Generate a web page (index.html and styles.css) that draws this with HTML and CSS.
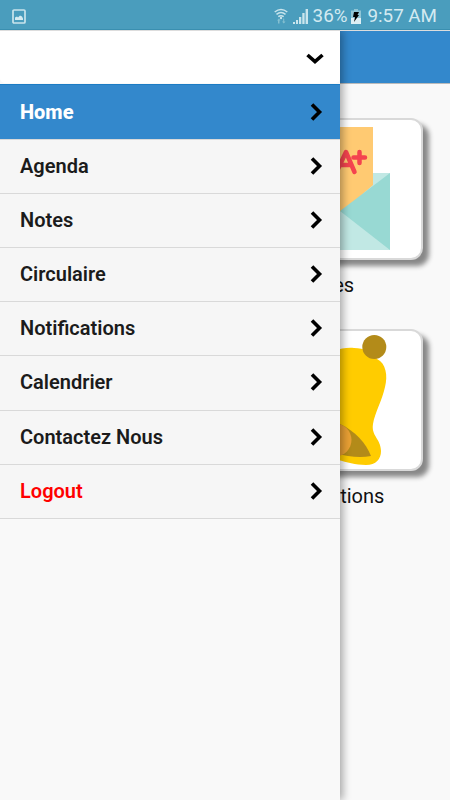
FILE: index.html
```html
<!DOCTYPE html>
<html lang="fr">
<head>
<meta charset="utf-8">
<title>Home</title>
<link rel="stylesheet" href="styles.css">
</head>
<body>
<div class="status">
  <svg class="shot" viewBox="0 0 14 15" width="14" height="15"><rect x="1" y="1" width="12" height="13" rx="1" fill="none" stroke="#c9e4ec" stroke-width="1.7"/><path d="M3 11V8.500l2-1 1 1 2-2 2 1 1 2V11z" fill="#d5ebf1"/></svg>
  <svg class="wifi" viewBox="0 0 14 16" width="14" height="16"><g fill="none" stroke="#c8e4ec" stroke-width="1.500"><path d="M.7 4Q7-1 13.300 4M2.500 6.400Q7 2.800 11.500 6.400M4.300 8.700Q7 6.700 9.700 8.700"/></g><circle cx="7" cy="10" r="1.200" fill="#c8e4ec"/><path d="M3 12.500l2-2 1.500 2H5.500v3H4v-3zM8 13.500h1.200v-3h1v3h1.300l-1.700 2z" fill="#86c0d1"/></svg>
  <svg class="signal" viewBox="0 0 15 15" width="15" height="15"><path d="M0 15v-2h2v2zM3 15v-4h2v4zM6 15V8h2.300v7zM9.300 15V4h2.300v11zM12.600 15V0H15v15z" fill="#cae5ed"/></svg>
  <span class="percent">36%</span>
  <svg class="battery" viewBox="0 0 10 15" width="10" height="15"><path d="M3 0h4v1.500h3V15H0V1.500h3z" fill="#8fc5d5"/><path d="M0 9h10v6H0z" fill="#deeff4"/><path d="M3 3h5L6.500 6H8L3 13l1-5H2z" fill="#000"/></svg>
  <span class="time">9:57 AM</span>
</div>
<div class="screen">
  <div class="page">
    <header class="header"></header>
    <main class="tiles">
      <div class="tile">
        <div class="card">
          <svg viewBox="237 121 183 136" width="183" height="136">
            <path d="M266 173h124v77H266z" fill="#c1e8e4"/>
            <path d="M283 127h90v58l-31 27-59-27z" fill="#ffca72"/>
            <path d="M390 173v77l-50-39z" fill="#98d9d3"/>
            <path d="M337 171l9-19 8.500 20M339 165h12M359.500 152v11M353.500 157.500h11.500" fill="none" stroke="#f4434f" stroke-width="4.500" stroke-linecap="round" stroke-linejoin="round"/>
          </svg>
        </div>
        <div class="label">Notes</div>
      </div>
      <div class="tile">
        <div class="card">
          <svg viewBox="237 332 183 136" width="183" height="136">
            <path d="M320 360C329 351 342 347 354 348C364 348 373 352 377 359C386 363 388 376 385 387C382 401 375 412 373 424C371 436 381 439 381 451C381 459 376 465 366 465C355 465 347 462 338 460L290 440C310 420 305 375 320 360z" fill="#fc0"/>
            <path d="M340 424C355 431 366 443 371 456C361 458 348 457 335 453z" fill="#b38b19"/>
            <circle cx="335" cy="440" r="16.500" fill="#e9a034"/>
            <circle cx="374.300" cy="347" r="12" fill="#b38b19"/>
          </svg>
        </div>
        <div class="label">Notifications</div>
      </div>
    </main>
  </div>
  <nav class="drawer">
    <div class="account"><svg class="chev" viewBox="0 0 20 20" width="20" height="20"><path d="M2.500 6L10 12.700 17.500 6"/></svg></div>
    <a class="item active">Home<svg class="chev" viewBox="0 0 20 20" width="20" height="20"><path d="M6 2.500L13.500 10 6 17.500"/></svg></a>
    <a class="item">Agenda<svg class="chev" viewBox="0 0 20 20" width="20" height="20"><path d="M6 2.500L13.500 10 6 17.500"/></svg></a>
    <a class="item">Notes<svg class="chev" viewBox="0 0 20 20" width="20" height="20"><path d="M6 2.500L13.500 10 6 17.500"/></svg></a>
    <a class="item">Circulaire<svg class="chev" viewBox="0 0 20 20" width="20" height="20"><path d="M6 2.500L13.500 10 6 17.500"/></svg></a>
    <a class="item">Notifications<svg class="chev" viewBox="0 0 20 20" width="20" height="20"><path d="M6 2.500L13.500 10 6 17.500"/></svg></a>
    <a class="item">Calendrier<svg class="chev" viewBox="0 0 20 20" width="20" height="20"><path d="M6 2.500L13.500 10 6 17.500"/></svg></a>
    <a class="item">Contactez Nous<svg class="chev" viewBox="0 0 20 20" width="20" height="20"><path d="M6 2.500L13.500 10 6 17.500"/></svg></a>
    <a class="item logout">Logout<svg class="chev" viewBox="0 0 20 20" width="20" height="20"><path d="M6 2.500L13.500 10 6 17.500"/></svg></a>
  </nav>
</div>
</body>
</html>
```
FILE: styles.css
```css
* { box-sizing: border-box; }
body {
  margin: 0;
  height: 800px;
  overflow: hidden;
  display: flex;
  flex-direction: column;
  font-family: Roboto, "Liberation Sans", sans-serif;
  background: #f9f9f9;
}
svg { display: block; flex: none; }
.status {
  flex: none;
  height: 30px;
  display: flex;
  align-items: center;
  padding: 3px 13px 0 12px;
  background: #4a9dbd;
  border-bottom: 1px solid #3a8fb0;
  color: #d3eaf1;
  font-size: 18.800px;
  line-height: 26px;
  white-space: nowrap;
}
.wifi { margin-left: auto; }
.signal { margin: 0 5px 0 5px; }
.battery { margin: 0 6px 0 4px; }
.screen {
  flex: 1;
  position: relative;
  border-top: 1px solid #ddd;
}
.header {
  height: 53px;
  background: #38c;
  border-bottom: 1px solid #bbb;
}
.tiles {
  display: flex;
  flex-direction: column;
  align-items: flex-end;
  padding: 34px 27px 0 0;
}
.tile { width: 189px; height: 211px; }
.card {
  height: 142px;
  padding: 1px;
  border: 2px solid #d9d9d9;
  border-radius: 12px;
  background: #fff;
  box-shadow: 6px 6px 5px #888;
}
.label {
  margin: 11px 2px 0 0;
  text-align: center;
  font-size: 20px;
  line-height: 28px;
  color: #111;
}
.drawer {
  position: absolute;
  top: 0;
  left: 0;
  width: 340px;
  height: 769px;
  background: #f9f9f9;
  box-shadow: 3px 0 8px rgba(0, 0, 0, .33);
  clip-path: inset(0 -16px 0 0);
}
.account, .item {
  display: flex;
  align-items: center;
  justify-content: space-between;
  padding: 0 14px 0 20px;
}
.account {
  height: 52px;
  justify-content: flex-end;
  padding: 3px 15px 0 0;
  background: #fff;
  border-radius: 0 0 5px 5px;
}
.item {
  height: 54.200px;
  padding-bottom: 1px;
  border-bottom: 1px solid #d9d9d9;
  background: #f6f6f6;
  color: #1b1b1b;
  font-size: 20px;
  font-weight: 600;
  line-height: 28px;
}
.active {
  height: 55.600px;
  margin-top: 1px;
  padding-top: 1px;
  border-top: 1px solid #1c7cc4;
  background: #38c;
  color: #fff;
  font-weight: 800;
}
.logout { color: #f00; }
.chev {
  fill: none;
  stroke: #000;
  stroke-width: 3.600;
}
```
